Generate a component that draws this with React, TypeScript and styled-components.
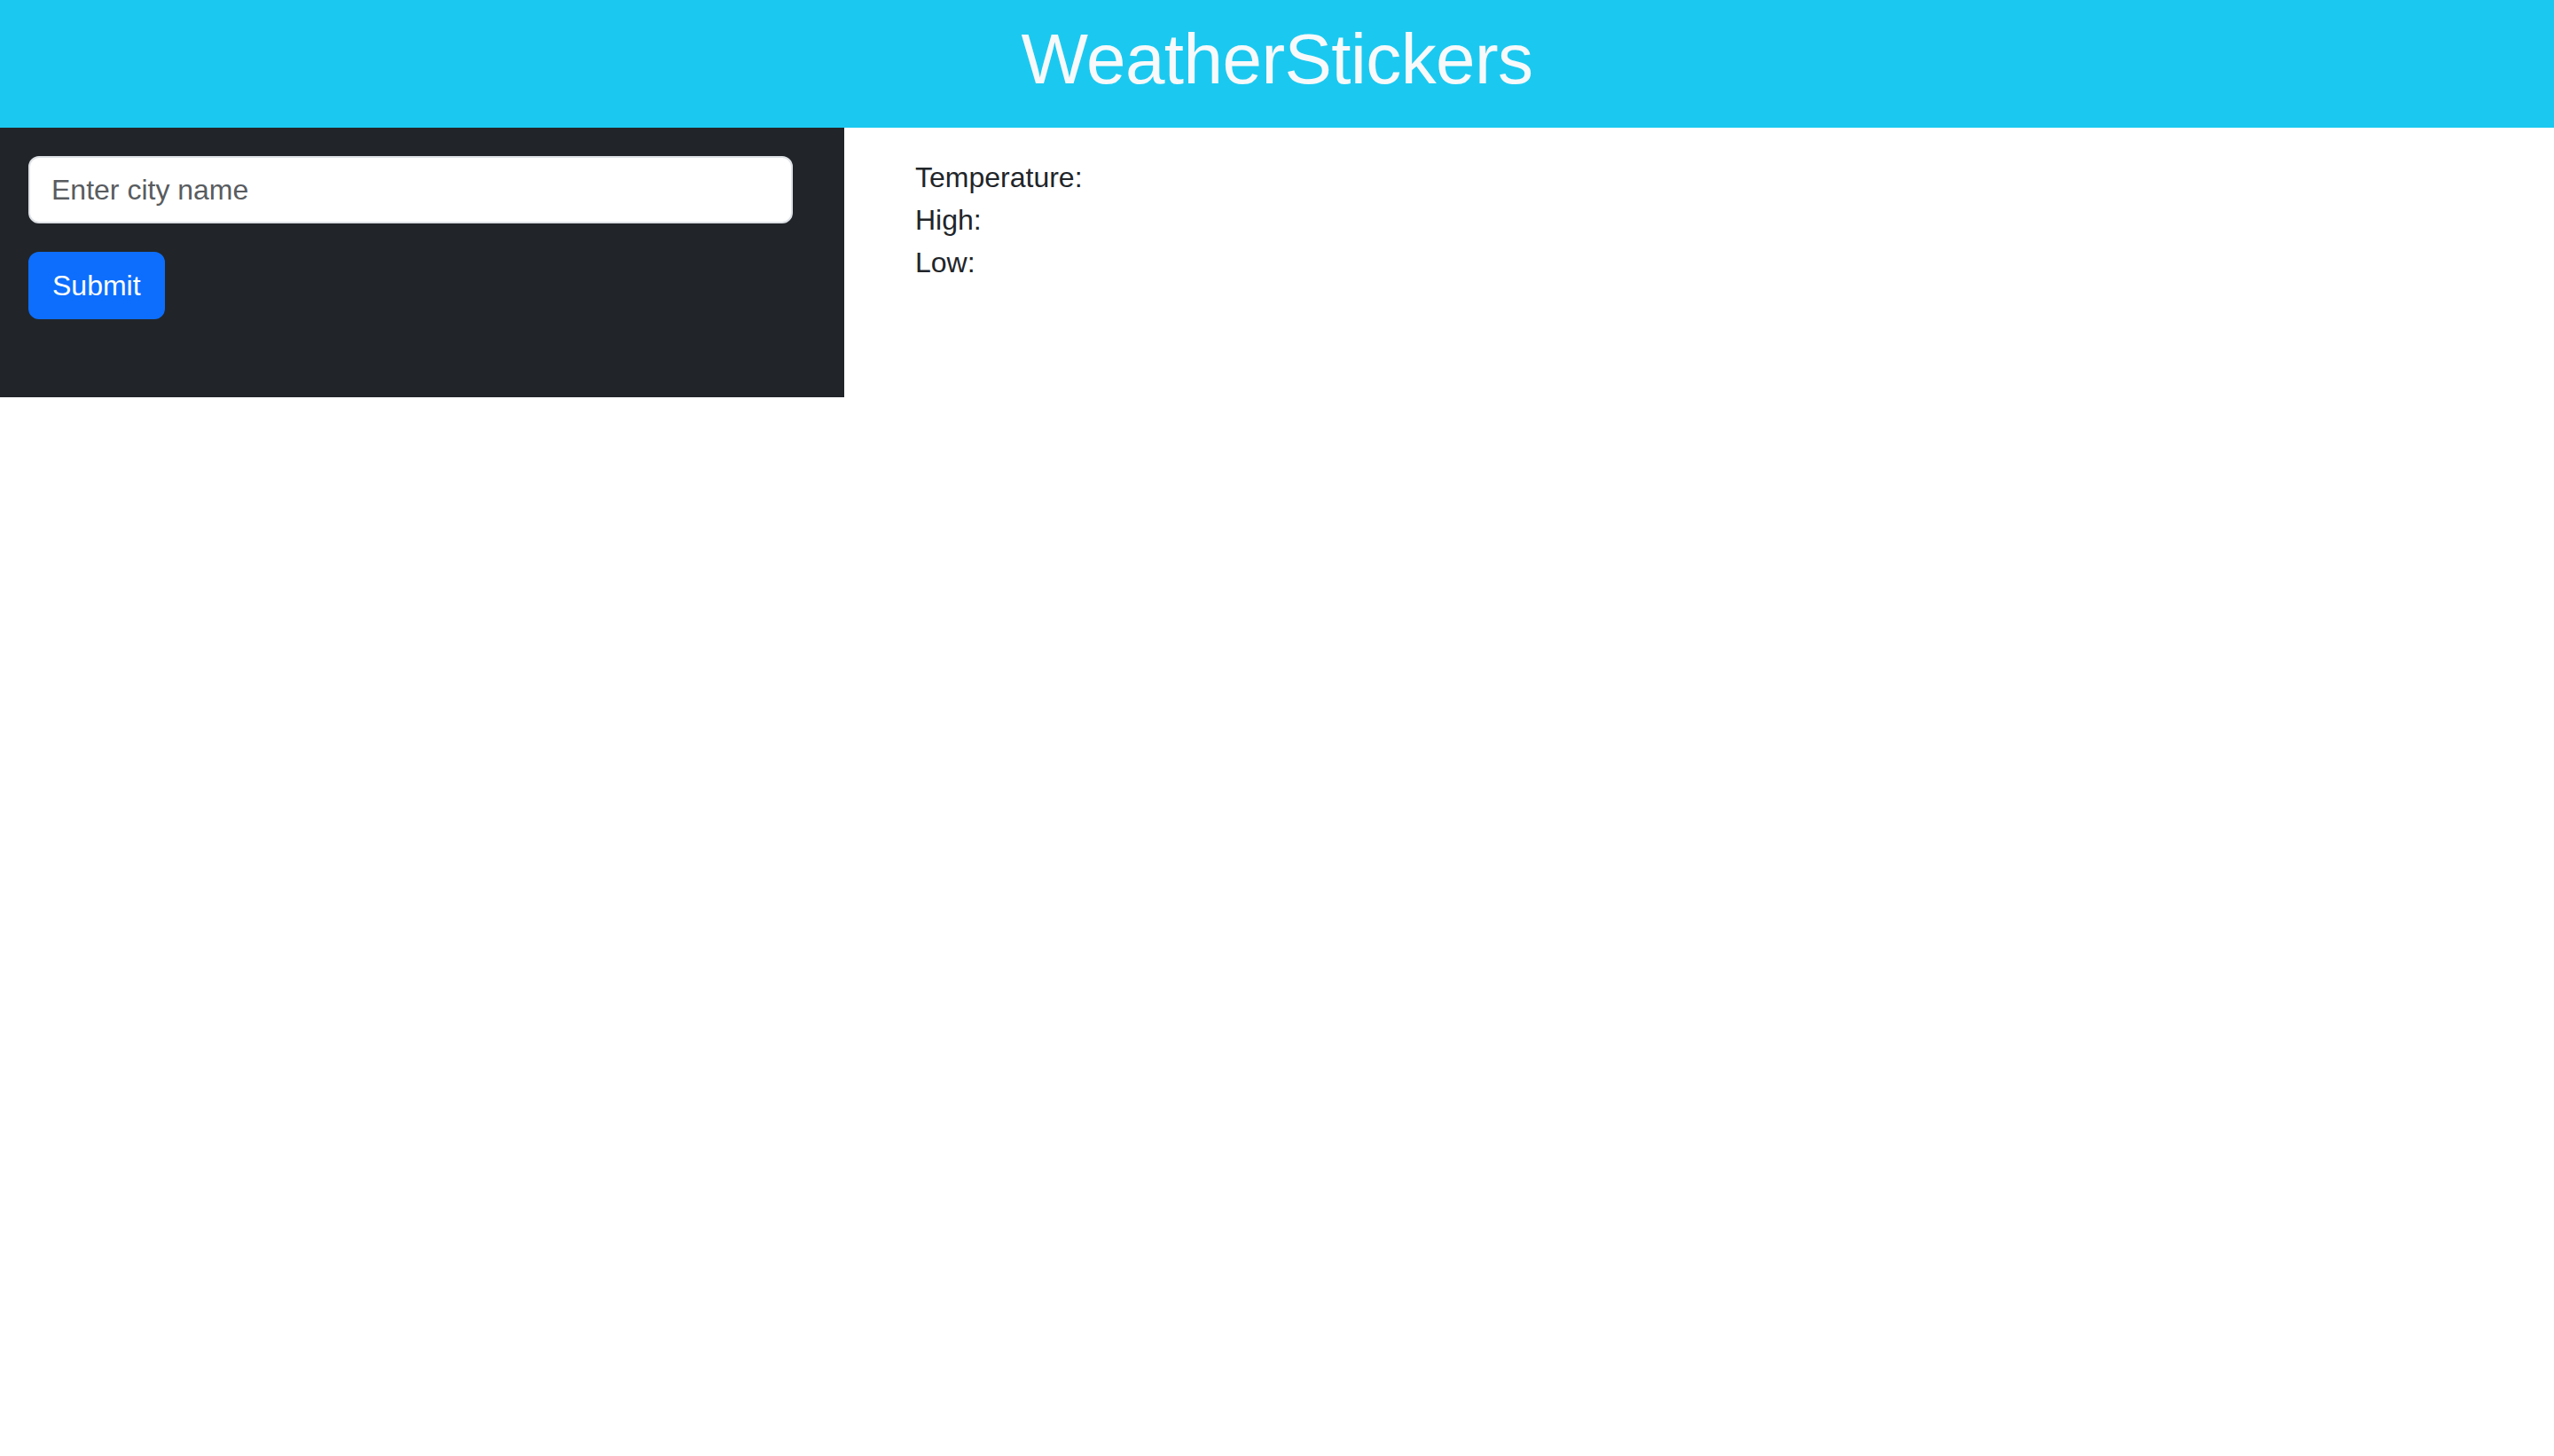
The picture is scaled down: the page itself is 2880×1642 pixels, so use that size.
import React from "react";
import styled, { createGlobalStyle } from "styled-components";

const GlobalStyle = createGlobalStyle`
  html, body {
    margin: 0;
    padding: 0;
    background: #ffffff;
  }
  body {
    font-family: "Liberation Sans", Arial, sans-serif;
    font-size: 32px;
    line-height: 48px;
    color: #212529;
  }
  * { box-sizing: border-box; }
`;

const Page = styled.div`
  display: flex;
  flex-direction: column;
  width: 100%;
`;

const Header = styled.header`
  height: 144px;
  background: #1bc9f0;
  display: flex;
  align-items: center;
  justify-content: center;
`;

const Title = styled.h1`
  margin: 0;
  padding-bottom: 10px;
  font-family: "Liberation Sans", Arial, sans-serif;
  font-weight: 400;
  font-size: 80px;
  line-height: 96px;
  letter-spacing: -0.55px;
  color: #f8f9fa;
`;

const Row = styled.main`
  display: flex;
  align-items: flex-start;
`;

const Sidebar = styled.section`
  width: 952px;
  flex: 0 0 952px;
  background: #212529;
  padding: 32px 32px 88px 32px;
  display: flex;
  flex-direction: column;
  gap: 32px;
`;

const Form = styled.form`
  display: flex;
  flex-direction: column;
  align-items: flex-start;
  gap: 32px;
  margin: 0;
`;

const CityInput = styled.input`
  width: 862px;
  height: 76px;
  padding: 12px 24px;
  border: 2px solid #dee2e6;
  border-radius: 12px;
  background: #ffffff;
  font-family: "Liberation Sans", Arial, sans-serif;
  font-size: 32px;
  line-height: 48px;
  color: #212529;
  outline: none;

  &::placeholder {
    color: #595c5f;
    opacity: 1;
  }
`;

const SubmitButton = styled.button`
  height: 76px;
  padding: 12px 25px;
  border: 2px solid #0d6efd;
  border-radius: 12px;
  background: #0d6efd;
  color: #ffffff;
  font-family: "Liberation Sans", Arial, sans-serif;
  font-size: 32px;
  line-height: 48px;
  cursor: pointer;
`;

const Results = styled.section`
  flex: 1;
  padding: 32px 0 0 80px;
  display: flex;
  flex-direction: column;
`;

const Stat = styled.div`
  font-size: 32px;
  line-height: 48px;
  color: #212529;
`;

export default function App() {
  return (
    <Page>
      <GlobalStyle />
      <Header>
        <Title>WeatherStickers</Title>
      </Header>
      <Row>
        <Sidebar>
          <Form onSubmit={(e) => e.preventDefault()}>
            <CityInput type="text" placeholder="Enter city name" />
            <SubmitButton type="submit">Submit</SubmitButton>
          </Form>
        </Sidebar>
        <Results>
          <Stat>Temperature:</Stat>
          <Stat>High:</Stat>
          <Stat>Low:</Stat>
        </Results>
      </Row>
    </Page>
  );
}
